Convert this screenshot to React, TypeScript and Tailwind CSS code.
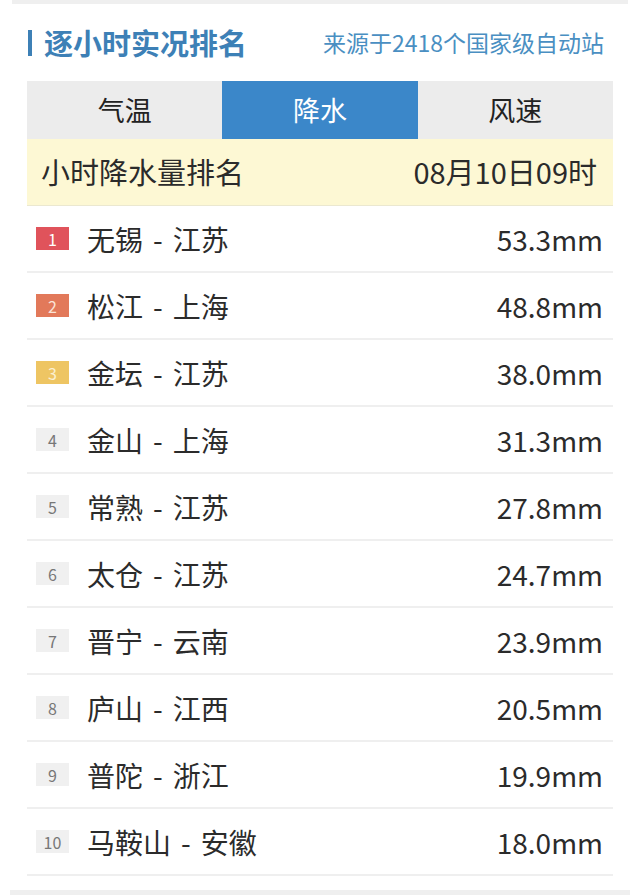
import React from "react";

const rows = [
  { rank: 1, city: "无锡", prov: "江苏", value: "53.3mm" },
  { rank: 2, city: "松江", prov: "上海", value: "48.8mm" },
  { rank: 3, city: "金坛", prov: "江苏", value: "38.0mm" },
  { rank: 4, city: "金山", prov: "上海", value: "31.3mm" },
  { rank: 5, city: "常熟", prov: "江苏", value: "27.8mm" },
  { rank: 6, city: "太仓", prov: "江苏", value: "24.7mm" },
  { rank: 7, city: "晋宁", prov: "云南", value: "23.9mm" },
  { rank: 8, city: "庐山", prov: "江西", value: "20.5mm" },
  { rank: 9, city: "普陀", prov: "浙江", value: "19.9mm" },
  { rank: 10, city: "马鞍山", prov: "安徽", value: "18.0mm" },
];

const badgeClass = (rank: number) => {
  if (rank === 1) return "bg-[#e0535b] text-white";
  if (rank === 2) return "bg-[#e2795a] text-[#fbe3d6]";
  if (rank === 3) return "bg-[#eec563] text-[#fbf0d2]";
  return "bg-[#f0f0f0] text-[#777]";
};

export default function App() {
  return (
    <div
      className="w-[640px] h-[895px] bg-white flex flex-col overflow-hidden text-[#333]"
      style={{ fontFamily: '"Noto Sans CJK SC", "Noto Sans", sans-serif' }}
    >
      <div className="h-[4px] mx-[12px] bg-[#efefef]" />

      {/* header */}
      <div className="h-[77px] flex items-center justify-between pl-[28px] pr-[36px]">
        <div className="flex items-center">
          <div className="w-[4px] h-[26px] bg-[#3d80b6]" />
          <span className="ml-[12px] text-[29px] font-bold text-[#3d80b6] leading-none">逐小时实况排名</span>
        </div>
        <span className="text-[23px] text-[#4a8fc2] leading-none">来源于2418个国家级自动站</span>
      </div>

      <div className="mx-[27px] flex flex-col">
        {/* tabs */}
        <div className="h-[58px] grid grid-cols-3 bg-[#ececec] text-[27px]">
          <div className="flex items-center justify-center text-[#222]">气温</div>
          <div className="flex items-center justify-center bg-[#3b87c9] text-white">降水</div>
          <div className="flex items-center justify-center text-[#222]">风速</div>
        </div>

        {/* sub header */}
        <div className="h-[67px] flex items-center justify-between bg-[#fdf8d4] pl-[14px] pr-[16px] text-[29px] text-[#2b2b2b] border-b border-[#ebe8d0]">
          <span>小时降水量排名</span>
          <span>08月10日09时</span>
        </div>

        {rows.map((r) => (
          <div
            key={r.rank}
            className="h-[67px] flex items-center pl-[9px] pr-[10px] border-b-2 border-[#efefef]"
          >
            <div
              className={`w-[33px] h-[23px] flex items-center justify-center text-[16px] leading-none ${badgeClass(r.rank)}`}
            >
              {r.rank}
            </div>
            <span className="ml-[18px] text-[28px] text-[#2b2b2b] flex items-center">
              <span>{r.city}</span>
              <span className="mx-[10px]">-</span>
              <span>{r.prov}</span>
            </span>
            <span className="ml-auto text-[28px] text-[#2b2b2b]">{r.value}</span>
          </div>
        ))}
      </div>

      <div className="flex-1" />
      <div className="h-[5px] mx-[10px] bg-[#efefef]" />
    </div>
  );
}
